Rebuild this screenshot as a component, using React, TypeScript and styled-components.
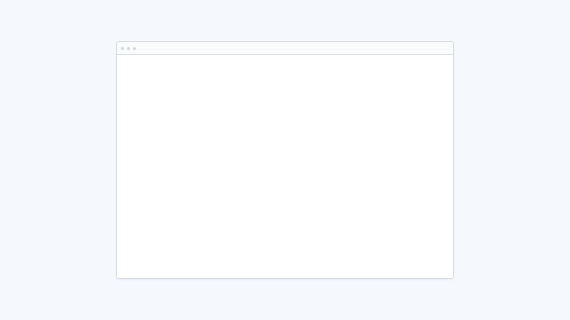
import React from "react";
import styled, { createGlobalStyle } from "styled-components";

const Global = createGlobalStyle`
  html, body { margin: 0; padding: 0; background: #f5f8fd; }
  body { font-family: "Liberation Sans", Arial, sans-serif; }
`;

const Stage = styled.div`
  width: 570px;
  height: 320px;
  display: flex;
  align-items: center;
  justify-content: center;
  background: #f5f8fd;
`;

const Window = styled.div`
  width: 338px;
  height: 238px;
  box-sizing: border-box;
  border: 1px solid #d9dce2;
  border-radius: 3px;
  background: #ffffff;
  display: flex;
  flex-direction: column;
  overflow: hidden;
  box-shadow: 0 1px 2px rgba(30, 40, 60, 0.06);
`;

const TitleBar = styled.div`
  height: 12px;
  flex: none;
  display: flex;
  align-items: center;
  gap: 3px;
  padding-left: 4px;
  background: #fafbfc;
  border-bottom: 1px solid #dcdfe4;
`;

const Dot = styled.span`
  width: 3px;
  height: 3px;
  border-radius: 50%;
  background: #d3d6dc;
`;

const Body = styled.div`
  flex: 1;
  background: #ffffff;
`;

export default function App() {
  return (
    <>
      <Global />
      <Stage>
        <Window>
          <TitleBar>
            <Dot />
            <Dot />
            <Dot />
          </TitleBar>
          <Body />
        </Window>
      </Stage>
    </>
  );
}
